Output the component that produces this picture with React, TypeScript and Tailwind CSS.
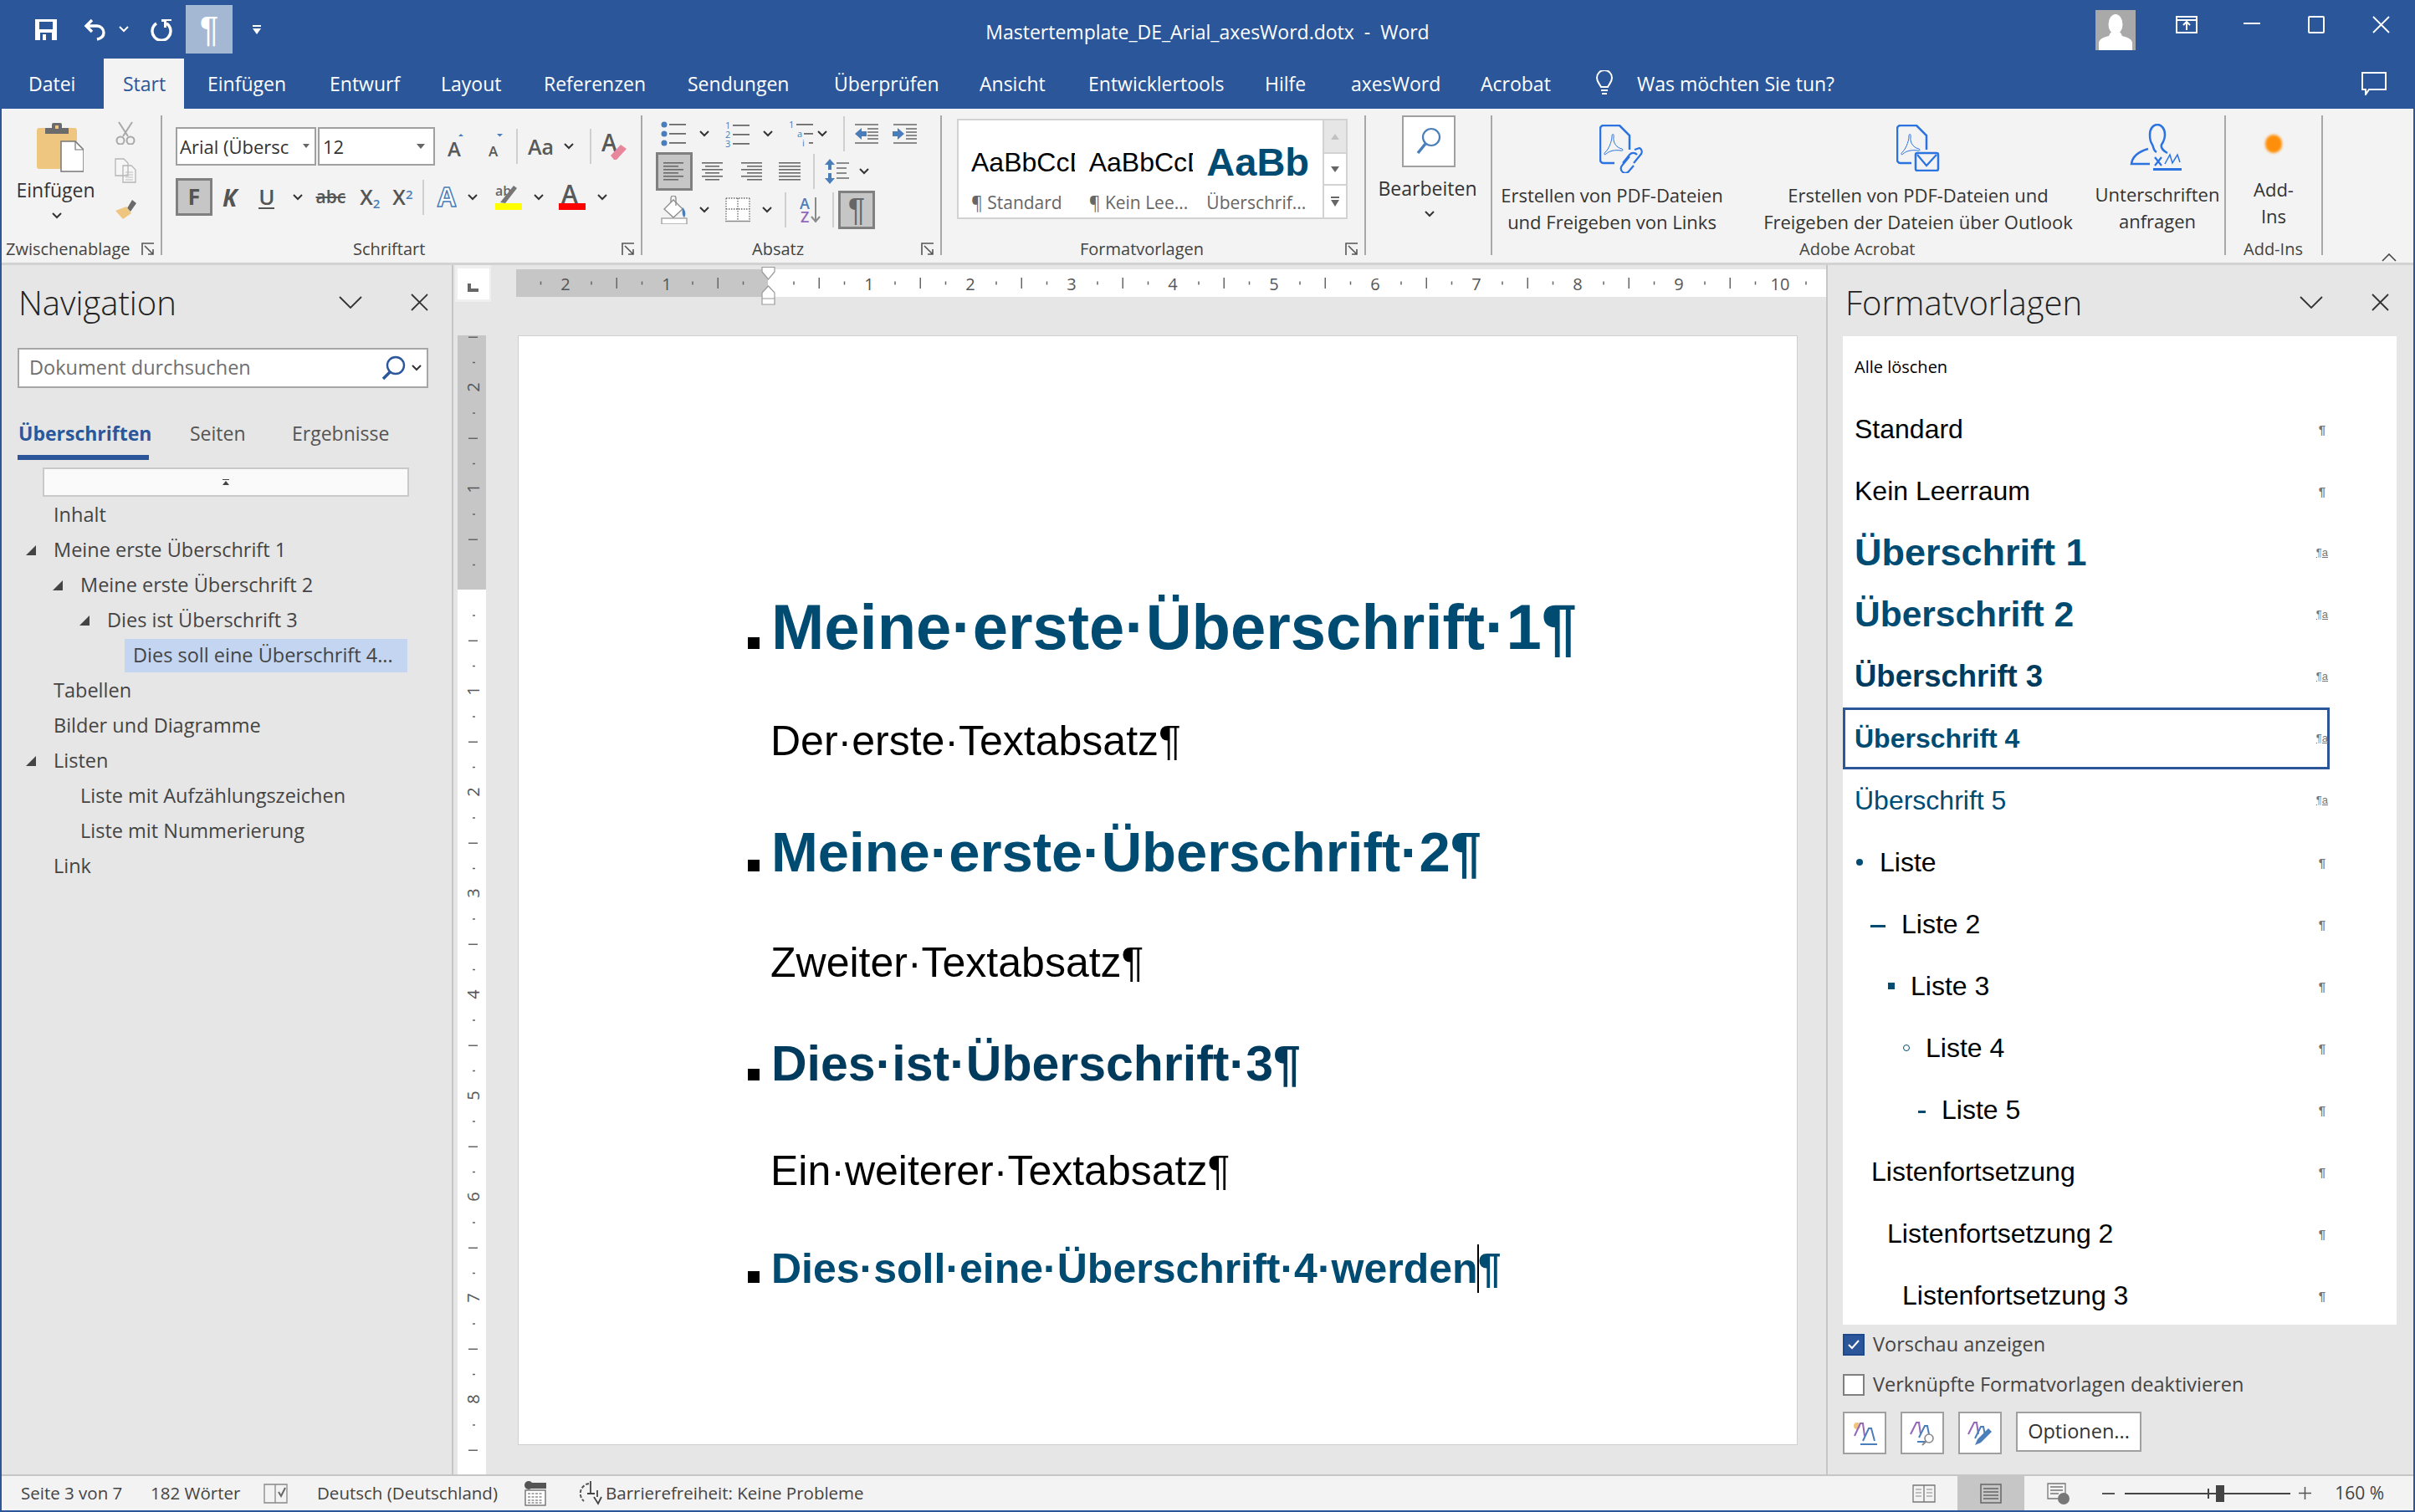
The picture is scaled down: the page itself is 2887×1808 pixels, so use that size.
import type { ReactNode } from 'react'

const Chev = ({ className = '' }: { className?: string }) => (
  <svg width="12" height="8" viewBox="0 0 12 8" className={`shrink-0 ${className}`}>
    <path d="M1 1l5 5 5-5" fill="none" stroke="#333" strokeWidth="2" />
  </svg>
)

const Sep = ({ className }: { className: string }) => <div className={`w-[2px] shrink-0 bg-[#cfcfcf] ${className}`} />

const Launcher = () => (
  <svg width="16" height="16" viewBox="0 0 16 16" className="ml-auto mr-[7px] shrink-0">
    <path d="M1 15V1H15M4 4L14 14M14 8V14H8" fill="none" stroke="#555" strokeWidth="1.6" />
  </svg>
)

function Group({ w, label, pl, launcher, children }: { w: string; label?: string; pl?: string; launcher?: boolean; children: ReactNode }) {
  return (
    <div className={`${w} h-[167px] mt-[8px] shrink-0 flex flex-col border-r-2 border-[#a8a8a8]`}>
      <div className="h-[153px] flex flex-col">{children}</div>
      <div className={`h-[14px] flex items-center text-[20px] text-[#444] whitespace-nowrap ${pl ?? ''}`}>
        {label}
        {launcher && <Launcher />}
      </div>
    </div>
  )
}

function LineIcon({ x, w = 28 }: { x: number[][]; w?: number }) {
  return (
    <svg width={w} height="22" viewBox={`0 0 ${w} 22`} className="shrink-0">
      {x.map(([a, b], i) => (
        <rect key={i} x={a} y={i * 4} width={b} height="1.6" fill="#6a6a6a" />
      ))}
    </svg>
  )
}

function SaveIcon() {
  return (
    <svg width="26" height="25" viewBox="0 0 26 25" className="shrink-0">
      <path fillRule="evenodd" fill="#fff" d="M0 0H26V25H0ZM5 3V12H21V3ZM6 16V25H20V16Z" />
      <rect x="9" y="18" width="4" height="7" fill="#fff" />
    </svg>
  )
}

function UndoIcon() {
  return (
    <svg width="27" height="27" viewBox="0 0 27 27" className="shrink-0">
      <path d="M10 2L3 9l7 7M3 9h13a8 8 0 0 1 8 8c0 4-3 7-8 8" fill="none" stroke="#fff" strokeWidth="3.4" />
    </svg>
  )
}

function RedoIcon() {
  return (
    <svg width="29" height="27" viewBox="0 0 29 27" className="shrink-0">
      <path d="M9 6a11 11 0 1 0 12 0" fill="none" stroke="#fff" strokeWidth="3.4" />
      <path d="M15 1h12v2h-6v8h-3V4h-3Z" fill="#fff" />
    </svg>
  )
}

function WindowButtons() {
  return (
    <div className="flex items-start pt-[12px] pr-[28px]">
      <div className="w-[48px] h-[48px] bg-[#a9a9a9] overflow-hidden">
        <svg width="48" height="48" viewBox="0 0 48 48">
          <ellipse cx="24" cy="17" rx="8.5" ry="12" fill="#fff" />
          <path d="M18 27h12l2 4c8 2 11 4 12 8v9H4v-9c1-4 4-6 12-8Z" fill="#fff" />
        </svg>
      </div>
      <svg width="26" height="21" viewBox="0 0 26 21" className="ml-[48px] mt-[7px]">
        <path d="M1 1H25V20H1ZM1 5H25M13 17V8M9 11l4-4 4 4" fill="none" stroke="#fff" strokeWidth="2" />
      </svg>
      <div className="ml-[55px] mt-[15px] w-[20px] h-[2px] bg-white" />
      <svg width="20" height="21" viewBox="0 0 20 21" className="ml-[57px] mt-[7px]">
        <rect x="1" y="1" width="18" height="19" rx="1" fill="none" stroke="#fff" strokeWidth="2" />
      </svg>
      <svg width="21" height="21" viewBox="0 0 21 21" className="ml-[57px] mt-[7px]">
        <path d="M1 1L20 20M20 1L1 20" stroke="#fff" strokeWidth="1.8" />
      </svg>
    </div>
  )
}

const tabs: [string, string][] = [
  ['Einfügen', 'w-[146px]'],
  ['Entwurf', 'w-[133px]'],
  ['Layout', 'w-[123px]'],
  ['Referenzen', 'w-[172px]'],
  ['Sendungen', 'w-[175px]'],
  ['Überprüfen', 'w-[174px]'],
  ['Ansicht', 'w-[130px]'],
  ['Entwicklertools', 'w-[211px]'],
  ['Hilfe', 'w-[103px]'],
  ['axesWord', 'w-[155px]'],
  ['Acrobat', 'w-[136px]'],
]

function TabBar() {
  return (
    <div className="h-[60px] flex items-stretch text-white text-[23px] whitespace-nowrap">
      <div className="w-[122px] pl-[32px] flex items-center">Datei</div>
      <div className="w-[96px] pl-[23px] flex items-center bg-[#f3f3f3] text-[#2b579a] mr-[28px]">Start</div>
      {tabs.map(([t, w]) => (
        <div key={t} className={`${w} flex items-center`}>{t}</div>
      ))}
      <svg width="24" height="32" viewBox="0 0 24 32" className="self-center">
        <path d="M8 20C6 16 3 14 3 9a9 9 0 0 1 18 0c0 5-3 7-5 11ZM8 24h8M9 28h6" fill="none" stroke="#fff" strokeWidth="2" />
      </svg>
      <div className="ml-[27px] flex items-center">Was möchten Sie tun?</div>
      <svg width="30" height="28" viewBox="0 0 30 28" className="self-center ml-auto mr-[32px]">
        <path d="M1 1H29V21H9L5 27V21H1Z" fill="none" stroke="#fff" strokeWidth="2" />
      </svg>
    </div>
  )
}

function PasteIcon() {
  return (
    <svg width="56" height="60" viewBox="0 0 56 60" className="shrink-0">
      <rect x="0" y="7" width="48" height="49" rx="3" fill="#eec67f" />
      <path d="M10 7h8V3a2 2 0 0 1 2-2h8a2 2 0 0 1 2 2v4h8v7H10Z" fill="#6b6b6b" />
      <rect x="22" y="4" width="4" height="4" fill="#eec67f" />
      <path d="M29 23H46L56 33V59H29Z" fill="#fff" stroke="#777" strokeWidth="1.5" />
      <path d="M46 23V33H56" fill="none" stroke="#777" strokeWidth="1.2" />
    </svg>
  )
}

function ClipboardGroup() {
  return (
    <div className="flex pt-[7px]">
      <div className="w-[118px] pl-[13px] flex flex-col items-center">
        <div className="ml-[8px] mt-[1px]"><PasteIcon /></div>
        <span className="mt-[6px] text-[23px] leading-[30px] text-[#333] ml-[-2px]">Einfügen</span>
        <Chev className="mt-[12px]" />
      </div>
      <div className="flex flex-col items-center ml-[17px] w-[26px]">
        <svg width="26" height="28" viewBox="0 0 26 28">
          <path d="M5 1l11 17M21 1L10 18" stroke="#a8a8a8" strokeWidth="2" fill="none" />
          <circle cx="7" cy="23" r="4.5" fill="none" stroke="#a8a8a8" strokeWidth="2" />
          <circle cx="19" cy="23" r="4.5" fill="none" stroke="#a8a8a8" strokeWidth="2" />
        </svg>
        <svg width="26" height="30" viewBox="0 0 26 30" className="mt-[16px]">
          <path d="M1 1H11L16 6V21H1ZM10 9H20L25 14V29H10Z" fill="#f6f6f6" stroke="#b5b5b5" strokeWidth="1.3" />
          <path d="M13 17h9M13 20h9M13 23h9M13 26h9" stroke="#bdbdbd" />
        </svg>
        <svg width="26" height="23" viewBox="0 0 26 23" className="mt-[20px]">
          <path d="M15 10L21 0l5 4-7 10Z" fill="#6a6a6a" />
          <path d="M1 13l13-5 6 8-10 7Z" fill="#eec67f" />
        </svg>
      </div>
    </div>
  )
}

function FontGroup() {
  const big = 'font-bold text-[#555] text-[26px] leading-none'
  return (
    <div className="pl-[16px] pt-[14px] flex flex-col text-[#333]">
      <div className="h-[46px] flex items-center">
        <div className="w-[168px] h-[46px] bg-white border-2 border-[#a0a0a0] flex items-center pl-[3px] text-[22px] whitespace-nowrap overflow-hidden">
          Arial (Übersc
          <svg width="8" height="6" viewBox="0 0 8 6" className="ml-auto mr-[6px] shrink-0"><path d="M0 0H8L4 5Z" fill="#666" /></svg>
        </div>
        <div className="w-[140px] h-[46px] ml-[2px] bg-white border-2 border-[#a0a0a0] flex items-center pl-[4px] text-[22px]">
          12
          <svg width="10" height="7" viewBox="0 0 10 7" className="ml-auto mr-[10px]"><path d="M0 0H10L5 6Z" fill="#666" /></svg>
        </div>
        <svg width="24" height="30" viewBox="0 0 24 30" className="ml-[15px] shrink-0">
          <path d="M13 3l3-3 3 3Z" fill="#4a7ebb" />
          <text x="0" y="27" fontFamily="Open Sans" fontSize="24" fontWeight="600" fill="#595959">A</text>
        </svg>
        <svg width="20" height="30" viewBox="0 0 20 30" className="ml-[24px] shrink-0">
          <path d="M11 0h7l-3.500 3.500Z" fill="#4a7ebb" />
          <text x="1" y="27" fontFamily="Open Sans" fontSize="17" fontWeight="600" fill="#595959">A</text>
        </svg>
        <Sep className="h-[42px] ml-[14px]" />
        <span className="ml-[12px] text-[#595959] text-[25px] font-semibold leading-none">Aa</span>
        <Chev className="ml-[12px]" />
        <Sep className="h-[42px] ml-[19px]" />
        <svg width="32" height="32" viewBox="0 0 32 32" className="ml-[12px] shrink-0">
          <text x="0" y="22" fontFamily="Open Sans" fontSize="28" fontWeight="600" fill="#595959">A</text>
          <path d="M11 27l12-13 7 5-12 13h-3Z" fill="#e8879c" />
        </svg>
      </div>
      <div className="h-[45px] mt-[15px] flex items-center">
        <div className="w-[44px] h-[45px] bg-[#c6c6c6] border-[3px] border-[#808080] flex items-center justify-center font-bold text-[27px] text-[#555]">F</div>
        <span className={`ml-[12px] italic ${big} text-[28px]`}>K</span>
        <span className="ml-[26px] text-[#555] font-semibold text-[26px] leading-[26px] border-b-2 border-[#555]">U</span>
        <Chev className="ml-[22px]" />
        <span className="ml-[15px] text-[#555] text-[21px] font-semibold line-through">abc</span>
        <span className="ml-[17px] text-[#555] text-[25px] font-semibold leading-none">X<sub className="text-[15px] text-[#4a7ebb]">2</sub></span>
        <span className="ml-[15px] text-[#555] text-[25px] font-semibold leading-none">X<sup className="text-[15px] text-[#4a7ebb]">2</sup></span>
        <Sep className="h-[42px] ml-[12px]" />
        <svg width="24" height="30" viewBox="0 0 24 30" className="ml-[15px] shrink-0">
          <text x="1" y="26" fontFamily="Open Sans" fontSize="32" fontWeight="700" fill="#fff" stroke="#4a7ebb" strokeWidth="1.5">A</text>
        </svg>
        <Chev className="ml-[13px]" />
        <svg width="32" height="30" viewBox="0 0 32 30" className="ml-[21px] shrink-0">
          <text x="0" y="13" fontFamily="Open Sans" fontSize="16" fill="#666" fontWeight="600">ab</text>
          <path d="M6 21L22 1l4 3L12 22Z" fill="#767676" />
          <rect x="0" y="22" width="32" height="8" fill="#ffff00" />
        </svg>
        <Chev className="ml-[14px]" />
        <svg width="32" height="30" viewBox="0 0 32 30" className="ml-[18px] shrink-0">
          <text x="3" y="22" fontFamily="Open Sans" fontSize="30" fontWeight="600" fill="#595959">A</text>
          <rect x="0" y="22" width="32" height="8" fill="#ff0000" />
        </svg>
        <Chev className="ml-[14px]" />
      </div>
    </div>
  )
}

function ParagraphGroup() {
  const digit = 'Open Sans'
  return (
    <div className="flex flex-col">
      <div className="h-[44px] flex items-center pl-[22px]">
        <svg width="32" height="30" viewBox="0 0 32 30" className="shrink-0">
          {[4, 15, 26].map(y => (
            <g key={y}><circle cx="4" cy={y} r="3.500" fill="#4a7ebb" /><rect x="10" y={y - 1} width="20" height="1.8" fill="#6a6a6a" /></g>
          ))}
        </svg>
        <Chev className="ml-[14px]" />
        <svg width="32" height="32" viewBox="0 0 32 32" className="ml-[19px] shrink-0">
          {['1', '2', '3'].map((d, i) => (
            <g key={d}><text x="0" y={10 + i * 11} fontFamily={digit} fontSize="11" fill="#4a7ebb">{d}</text><rect x="9" y={5 + i * 11} width="20" height="1.8" fill="#6a6a6a" /></g>
          ))}
        </svg>
        <Chev className="ml-[13px]" />
        <svg width="32" height="32" viewBox="0 0 32 32" className="ml-[19px] shrink-0">
          <text x="0" y="9" fontFamily={digit} fontSize="11" fill="#4a7ebb">1</text><rect x="9" y="4" width="20" height="1.8" fill="#6a6a6a" />
          <text x="10" y="20" fontFamily={digit} fontSize="11" fill="#4a7ebb">a</text><rect x="18" y="15" width="11" height="1.8" fill="#6a6a6a" />
          <text x="16" y="31" fontFamily={digit} fontSize="11" fill="#4a7ebb">i</text><rect x="24" y="26" width="5" height="1.8" fill="#6a6a6a" />
        </svg>
        <Chev className="ml-[2px]" />
        <Sep className="h-[42px] ml-[19px]" />
        <svg width="30" height="24" viewBox="0 0 30 24" className="ml-[11px] shrink-0">
          <path d="M1 1H29M1 23H29M16 6H29M16 10H29M16 14H29M16 18H29" stroke="#6a6a6a" strokeWidth="1.6" />
          <path d="M1 12l8-7v4h6v6H9v4Z" fill="#4a7ebb" />
        </svg>
        <svg width="30" height="24" viewBox="0 0 30 24" className="ml-[16px] shrink-0">
          <path d="M1 1H29M1 23H29M16 6H29M16 10H29M16 14H29M16 18H29" stroke="#6a6a6a" strokeWidth="1.6" />
          <path d="M14 12l-8-7v4H0v6h6v4Z" fill="#4a7ebb" />
        </svg>
      </div>
      <div className="h-[46px] flex items-center pl-[16px]">
        <div className="w-[44px] h-[46px] bg-[#c6c6c6] border-[3px] border-[#808080] flex items-center justify-center">
          <LineIcon w={26} x={[[0, 24], [0, 18], [0, 24], [0, 18], [0, 24], [0, 18]]} />
        </div>
        <div className="ml-[11px]"><LineIcon w={26} x={[[0, 25], [4, 17], [0, 25], [4, 17], [0, 25], [4, 17]]} /></div>
        <div className="ml-[21px]"><LineIcon w={26} x={[[0, 25], [7, 18], [0, 25], [7, 18], [0, 25], [7, 18]]} /></div>
        <div className="ml-[19px]"><LineIcon w={27} x={[[0, 26], [0, 26], [0, 26], [0, 26], [0, 26], [0, 26]]} /></div>
        <Sep className="h-[42px] ml-[14px]" />
        <svg width="30" height="30" viewBox="0 0 30 30" className="ml-[12px] shrink-0">
          <path d="M6 0l6 7H8v6H4V7H0ZM6 30l6-7H8v-6H4v6H0Z" fill="#4a7ebb" />
          <path d="M14 5H29M14 11H26M14 17H26M14 23H29" stroke="#6a6a6a" strokeWidth="1.6" />
        </svg>
        <Chev className="ml-[11px]" />
      </div>
      <div className="h-[46px] flex items-center pl-[22px]">
        <svg width="32" height="34" viewBox="0 0 32 34" className="shrink-0">
          <path d="M15 5L4 16l11 10 11-10Z" fill="#fff" stroke="#8a8a8a" strokeWidth="1.3" />
          <path d="M12 8V3a3 3 0 0 1 6 0v9" fill="none" stroke="#8a8a8a" strokeWidth="1.3" />
          <path d="M26 14c4 4 4 9 2 12-2-1-3-6-2-12Z" fill="#4a7ebb" />
          <rect x="1" y="27" width="30" height="7" fill="#fff" stroke="#9c9c9c" strokeWidth="1.3" />
        </svg>
        <Chev className="ml-[14px]" />
        <svg width="30" height="30" viewBox="0 0 30 30" className="ml-[19px] shrink-0">
          <rect x="1" y="1" width="28" height="27" fill="#fff" />
          <path d="M1 1H29M1 14H29M1 1V28M15 1V28M29 1V28" fill="none" stroke="#6a6a6a" strokeDasharray="1.500 1.500" strokeWidth="1.3" />
          <path d="M0 28.500H30" stroke="#8a8a8a" strokeWidth="1.500" />
        </svg>
        <Chev className="ml-[14px]" />
        <Sep className="h-[42px] ml-[15px]" />
        <svg width="26" height="32" viewBox="0 0 26 32" className="ml-[16px] shrink-0">
          <text x="0" y="15" fontFamily={digit} fontSize="18" fontWeight="600" fill="#4a7ebb">A</text>
          <text x="1" y="31" fontFamily={digit} fontSize="18" fontWeight="600" fill="#9567b8">Z</text>
          <path d="M19 1V29M14 24l5 6 5-6" fill="none" stroke="#8a8a8a" strokeWidth="2" />
        </svg>
        <Sep className="h-[42px] ml-[13px]" />
        <div className="w-[44px] h-[46px] ml-[5px] bg-[#c6c6c6] border-[3px] border-[#808080] flex items-center justify-center text-[38px] leading-none text-[#666] font-['Liberation_Sans',sans-serif]">¶</div>
      </div>
    </div>
  )
}

function StylesGallery() {
  return (
    <div className="ml-[18px] mt-[4px] w-[467px] h-[120px] flex">
      <div className="w-[439px] bg-white border-2 border-[#d2d2d2] flex pl-[13px]">
        {[
          ['AaBbCcDd', '¶ Standard', "font-['Liberation_Sans',sans-serif] text-[32px] text-black"],
          ['AaBbCcDd', '¶ Kein Lee...', "font-['Liberation_Sans',sans-serif] text-[32px] text-black"],
          ['AaBb', 'Überschrif...', "font-['Liberation_Sans',sans-serif] font-bold text-[47px] text-[#004b72]"],
        ].map(([s, l, c]) => (
          <div key={l} className="w-[143px] pl-[2px] flex flex-col">
            <div className={`w-[124px] h-[80px] overflow-hidden whitespace-nowrap flex items-center pt-[20px] ${c}`}>{s}</div>
            <div className="text-[21px] text-[#666] whitespace-nowrap mt-[3px]">{l}</div>
          </div>
        ))}
      </div>
      <div className="w-[28px] flex flex-col border-y-2 border-r-2 border-[#d2d2d2] bg-white">
        <div className="h-[40px] bg-[#e6e6e6] border-b-2 border-[#d2d2d2] flex items-center justify-center">
          <svg width="10" height="7" viewBox="0 0 10 7"><path d="M0 7L5 0l5 7Z" fill="#c2c2c2" /></svg>
        </div>
        <div className="h-[38px] border-b-2 border-[#d2d2d2] flex items-center justify-center">
          <svg width="10" height="7" viewBox="0 0 10 7"><path d="M0 0H10L5 7Z" fill="#666" /></svg>
        </div>
        <div className="flex-1 flex items-center justify-center">
          <svg width="10" height="12" viewBox="0 0 10 12"><path d="M0 0H10V2H0ZM0 4H10L5 12Z" fill="#666" /></svg>
        </div>
      </div>
    </div>
  )
}

function AdobeGroup() {
  const blue = '#2b73e0'
  return (
    <div className="flex h-full text-[22px] leading-[32px] text-[#333] whitespace-nowrap">
      <div className="w-[310px] shrink-0 flex flex-col items-center">
        <svg width="52" height="58" viewBox="0 0 52 58" className="mt-[11px] ml-[-2px] shrink-0">
          <path d="M5 1H24L36 13V30M18 46H5a4 4 0 0 1-4-4V5a4 4 0 0 1 4-4" fill="none" stroke={blue} strokeWidth="2.500" />
          <path d="M7 33c3-2 8-12 8-19 0-4 3-3 2 1-1 7 4 13 10 14 2 1 1 3-2 2-5-1-13 0-17 4-2 2-3 0-1-2Z" fill="none" stroke={blue} strokeWidth="1" />
          <path d="M28 46l8-10a6 6 0 0 1 9 0M42 30l6-2a5 5 0 0 1 2 7l-9 11M36 38l-9 11a5 5 0 0 0 8 7l6-7" fill="none" stroke={blue} strokeWidth="2.200" />
        </svg>
        <span className="mt-[10px] ml-[-24px]">Erstellen von PDF-Dateien</span>
        <span className="ml-[-24px]">und Freigeben von Links</span>
      </div>
      <div className="w-[430px] shrink-0 flex flex-col items-center ml-[-16px]">
        <svg width="52" height="56" viewBox="0 0 52 56" className="mt-[11px] shrink-0">
          <path d="M5 1H24L36 13V30M18 46H5a4 4 0 0 1-4-4V5a4 4 0 0 1 4-4" fill="none" stroke={blue} strokeWidth="2.500" />
          <path d="M7 33c3-2 8-12 8-19 0-4 3-3 2 1-1 7 4 13 10 14 2 1 1 3-2 2-5-1-13 0-17 4-2 2-3 0-1-2Z" fill="none" stroke={blue} strokeWidth="1" />
          <rect x="23" y="34" width="27" height="21" rx="2" fill="#f3f3f3" stroke={blue} strokeWidth="2.500" />
          <path d="M25 36l11 13 12-13" fill="none" stroke={blue} strokeWidth="2.200" />
        </svg>
        <span className="mt-[12px]">Erstellen von PDF-Dateien und</span>
        <span>Freigeben der Dateien über Outlook</span>
      </div>
      <div className="w-[150px] shrink-0 flex flex-col items-center ml-[-4px]">
        <svg width="64" height="58" viewBox="0 0 64 58" className="mt-[10px] ml-[-2px] shrink-0">
          <path d="M32 34c-4-2-3-5-5-9-3-4-3-9-3-12 0-7 4-12 9-12 0 0 0 0 0 0 5 0 9 5 9 12 0 5-2 9-4 12-1 3 0 6 7 10M22 30C8 34 3 40 2 48H24" fill="none" stroke={blue} strokeWidth="2.500" />
          <path d="M30 40l8 10M38 40l-8 10" stroke={blue} strokeWidth="2.200" />
          <path d="M42 48l6-11 3 10 6-10 3 9" fill="none" stroke={blue} strokeWidth="1.500" />
          <rect x="28" y="53" width="34" height="3" fill={blue} />
        </svg>
        <span className="mt-[10px]">Unterschriften</span>
        <span>anfragen</span>
      </div>
    </div>
  )
}

function Ribbon() {
  return (
    <div className="h-[187px] bg-[#f3f3f3] border-b-[3px] border-[#d2d2d2] flex">
      <Group w="w-[192px]" label="Zwischenablage" pl="pl-[5px]" launcher><ClipboardGroup /></Group>
      <Group w="w-[574px]" label="Schriftart" pl="pl-[228px]" launcher><FontGroup /></Group>
      <Group w="w-[358px]" label="Absatz" pl="pl-[131px]" launcher><ParagraphGroup /></Group>
      <Group w="w-[507px]" label="Formatvorlagen" pl="pl-[165px]" launcher><StylesGallery /></Group>
      <Group w="w-[151px]">
        <div className="ml-[43px] w-[64px] h-[62px] bg-white border-2 border-[#a0a0a0] flex items-center justify-center shrink-0">
          <svg width="30" height="34" viewBox="0 0 30 34">
            <circle cx="18" cy="12" r="10" fill="none" stroke="#4a7ebb" strokeWidth="2.200" />
            <path d="M11 20L2 31" stroke="#4a7ebb" strokeWidth="3.500" />
          </svg>
        </div>
        <span className="mt-[10px] text-center text-[23px] leading-[30px] text-[#333] pl-[-2px] ml-[-2px]">Bearbeiten</span>
        <Chev className="ml-[70px] mt-[12px]" />
      </Group>
      <Group w="w-[877px]" label="Adobe Acrobat" pl="pl-[367px]"><AdobeGroup /></Group>
      <Group w="w-[116px]" label="Add-Ins" pl="pl-[21px]">
        <div className="flex flex-col items-center h-full text-[22px] leading-[32px] text-[#333]">
          <div className="w-[20px] h-[22px] mt-[23px] rounded-full bg-[#ff8f0a] blur-[1.5px] shrink-0" />
          <span className="mt-[27px]">Add-</span>
          <span>Ins</span>
        </div>
      </Group>
      <div className="flex-1 flex items-end justify-end pr-[20px] pb-[1px]">
        <svg width="18" height="10" viewBox="0 0 18 10"><path d="M1 9l8-8 8 8" fill="none" stroke="#444" strokeWidth="1.6" /></svg>
      </div>
    </div>
  )
}

const Tri = () => (
  <svg width="12" height="12" viewBox="0 0 12 12" className="shrink-0"><path d="M12 0V12H0Z" fill="#444" /></svg>
)

const navItems: { t: string; tri?: string; cls: string }[] = [
  { t: 'Inhalt', cls: 'pl-[62px]' },
  { t: 'Meine erste Überschrift 1', tri: 'ml-[29px] mr-[21px]', cls: '' },
  { t: 'Meine erste Überschrift 2', tri: 'ml-[61px] mr-[21px]', cls: '' },
  { t: 'Dies ist Überschrift 3', tri: 'ml-[93px] mr-[21px]', cls: '' },
]
const navItems2 = [
  { t: 'Tabellen', cls: 'pl-[62px]' },
  { t: 'Bilder und Diagramme', cls: 'pl-[62px]' },
  { t: 'Listen', cls: 'pl-[29px]', tri: true },
  { t: 'Liste mit Aufzählungszeichen', cls: 'pl-[94px]' },
  { t: 'Liste mit Nummerierung', cls: 'pl-[94px]' },
  { t: 'Link', cls: 'pl-[62px]' },
]

function NavPane() {
  return (
    <div className="w-[540px] shrink-0 border-r-2 border-[#c6c6c6] flex flex-col">
      <div className="h-[85px] flex items-center pl-[20px] pr-[28px] pt-[4px]">
        <span className="text-[40px] font-light text-[#222] leading-none">Navigation</span>
        <svg width="28" height="15" viewBox="0 0 28 15" className="ml-auto"><path d="M1 1l13 13L27 1" fill="none" stroke="#333" strokeWidth="1.800" /></svg>
        <svg width="21" height="21" viewBox="0 0 21 21" className="ml-[58px]"><path d="M1 1L20 20M20 1L1 20" stroke="#333" strokeWidth="1.800" /></svg>
      </div>
      <div className="ml-[19px] mt-[14px] w-[491px] h-[48px] bg-white border-2 border-[#a6a6a6] flex items-center pl-[12px] pr-[6px]">
        <span className="text-[23.500px] text-[#6f6f6f]">Dokument durchsuchen</span>
        <svg width="30" height="30" viewBox="0 0 30 30" className="ml-auto">
          <circle cx="18" cy="12" r="10" fill="none" stroke="#2b579a" strokeWidth="2.400" />
          <path d="M11 20L3 28" stroke="#2b579a" strokeWidth="3.500" />
        </svg>
        <Chev className="ml-[7px]" />
      </div>
      <div className="ml-[19px] mt-[36px] flex items-end h-[50px] text-[23.500px] text-[#555] whitespace-nowrap">
        <div className="w-[157px] h-[50px] border-b-[6px] border-[#2b579a] font-bold text-[#2b579a] pl-[1px] pt-[1px] text-[23px]">Überschriften</div>
        <div className="w-[122px] h-[50px] pl-[49px] pt-[1px] text-[23px]">Seiten</div>
        <div className="h-[50px] pl-[49px] pt-[1px] text-[23px]">Ergebnisse</div>
      </div>
      <div className="ml-[49px] mt-[9px] w-[438px] h-[35px] bg-[#fafafa] border-2 border-[#c9c9c9] flex items-center justify-center shrink-0">
        <svg width="8" height="7" viewBox="0 0 8 7"><path d="M0 0H8V1H0ZM4 2l4 5H0Z" fill="#444" /></svg>
      </div>
      <div className="flex flex-col text-[23.500px] text-[#444] whitespace-nowrap mt-[1px]">
        {navItems.map(n => (
          <div key={n.t} className={`h-[42px] flex items-center ${n.cls}`}>
            {n.tri && <div className={n.tri}><Tri /></div>}
            {n.t}
          </div>
        ))}
        <div className="h-[42px] flex items-center">
          <div className="ml-[147px] w-[338px] h-[40px] pl-[10px] bg-[#c3d5f0] flex items-center">Dies soll eine Überschrift 4...</div>
        </div>
        {navItems2.map(n => (
          <div key={n.t} className={`h-[42px] flex items-center ${n.cls}`}>
            {n.tri && <div className="mr-[21px]"><Tri /></div>}
            {n.t}
          </div>
        ))}
      </div>
    </div>
  )
}

function HRuler() {
  const ticks = Array.from({ length: 53 }, (_, k) => k - 10)
  return (
    <svg width="1568" height="48" viewBox="0 0 1568 48" className="shrink-0">
      <rect x="0" y="5" width="1568" height="33" fill="#fff" />
      <rect x="0" y="5" width="301" height="33" fill="#c6c6c6" />
      {ticks.map(i => {
        const x = 301 + i * 30.25
        if (i === 0) return null
        if (i % 4 === 0)
          return <text key={i} x={x} y="22" textAnchor="middle" dominantBaseline="central" fontFamily="Open Sans" fontSize="20" fill="#555">{Math.abs(i / 4)}</text>
        return <rect key={i} x={x} y={i % 2 === 0 ? 15 : 19.5} width="1.5" height={i % 2 === 0 ? 13 : 4} fill="#666" />
      })}
      <path d="M294 2.500H309V8L301.500 17L294 8ZM294 40V33L301.500 25L309 33V40ZM294 40H309V47H294Z" fill="#fff" stroke="#9a9a9a" strokeWidth="1.200" />
    </svg>
  )
}

function VRuler() {
  const ticks = Array.from({ length: 46 }, (_, k) => k - 10)
  return (
    <svg width="34" height="1363" viewBox="0 0 34 1363" className="shrink-0">
      <rect x="0" y="0" width="34" height="1363" fill="#fff" />
      <rect x="0" y="0" width="34" height="304" fill="#c6c6c6" />
      {ticks.map(i => {
        const y = 304 + i * 30.25
        if (i === 0) return null
        if (i % 4 === 0)
          return <text key={i} x="18" y={y} textAnchor="middle" dominantBaseline="central" fontFamily="Open Sans" fontSize="20" fill="#555" transform={`rotate(-90 18 ${y})`}>{Math.abs(i / 4)}</text>
        return <rect key={i} x={i % 2 === 0 ? 13 : 18} y={y} width={i % 2 === 0 ? 11 : 3} height="1.500" fill="#666" />
      })}
    </svg>
  )
}

function Page() {
  const square = 'inline-block bg-black mr-[14px] shrink-0'
  return (
    <div className="flex-1 mb-[35px] bg-white border border-[#cfcfcf] pl-[274px] font-['Liberation_Sans',Arial,sans-serif] whitespace-nowrap">
      <div className="mt-[298px] h-[100px] flex items-baseline font-bold text-[76px] leading-[100px] text-[#004b72]">
        <span className={`${square} w-[14px] h-[14px]`} />Meine·erste·Überschrift·1¶
      </div>
      <div className="mt-[56px] h-[60px] pl-[27px] text-[50px] leading-[60px] text-black">Der·erste·Textabsatz¶</div>
      <div className="mt-[58px] h-[90px] flex items-baseline font-bold text-[67px] leading-[90px] text-[#004b72]">
        <span className={`${square} w-[14px] h-[14px]`} />Meine·erste·Überschrift·2¶
      </div>
      <div className="mt-[57px] h-[60px] pl-[27px] text-[50px] leading-[60px] text-black">Zweiter·Textabsatz¶</div>
      <div className="mt-[51px] h-[80px] flex items-baseline font-bold text-[59px] leading-[80px] text-[#003a5c]">
        <span className={`${square} w-[14px] h-[14px]`} />Dies·ist·Überschrift·3¶
      </div>
      <div className="mt-[58px] h-[60px] pl-[27px] text-[50px] leading-[60px] text-black">Ein·weiterer·Textabsatz¶</div>
      <div className="mt-[52px] h-[70px] flex items-baseline font-bold text-[50px] leading-[70px] text-[#004b72]">
        <span className={`${square} w-[14px] h-[14px]`} />Dies·soll·eine·Überschrift·4·werden<span className="inline-block w-[2px] h-[58px] bg-black self-center -ml-[1px] -mr-[1px]" />¶
      </div>
    </div>
  )
}

const rows: { t: string; cls: string; pad: string; bullet?: string; linked?: boolean; sel?: boolean }[] = [
  { t: 'Standard', cls: 'text-[32px] text-black', pad: 'pl-[11px]' },
  { t: 'Kein Leerraum', cls: 'text-[32px] text-black', pad: 'pl-[11px]' },
  { t: 'Überschrift 1', cls: 'text-[45px] font-bold text-[#004b72]', pad: 'pl-[11px]', linked: true },
  { t: 'Überschrift 2', cls: 'text-[42.500px] font-bold text-[#004b72]', pad: 'pl-[11px]', linked: true },
  { t: 'Überschrift 3', cls: 'text-[36.500px] font-bold text-[#003a5c]', pad: 'pl-[11px]', linked: true },
  { t: 'Überschrift 4', cls: 'text-[32px] font-bold text-[#004b72]', pad: 'pl-[11px]', linked: true, sel: true },
  { t: 'Überschrift 5', cls: 'text-[32px] text-[#004b72]', pad: 'pl-[11px]', linked: true },
  { t: 'Liste', cls: 'text-[32px] text-black', pad: 'pl-[13px]', bullet: 'w-[8px] h-[8px] rounded-full bg-[#004b72] mr-[20px]' },
  { t: 'Liste 2', cls: 'text-[32px] text-black', pad: 'pl-[30px]', bullet: 'w-[18px] h-[3px] bg-[#004b72] mr-[19px] mt-[5px]' },
  { t: 'Liste 3', cls: 'text-[32px] text-black', pad: 'pl-[51px]', bullet: 'w-[8px] h-[8px] bg-[#004b72] mr-[19px]' },
  { t: 'Liste 4', cls: 'text-[32px] text-black', pad: 'pl-[69px]', bullet: 'w-[8px] h-[8px] rounded-full border border-[#004b72] mr-[19px]' },
  { t: 'Liste 5', cls: 'text-[32px] text-black', pad: 'pl-[87px]', bullet: 'w-[9px] h-[3px] bg-[#004b72] mr-[19px] mt-[5px]' },
  { t: 'Listenfortsetzung', cls: 'text-[32px] text-black', pad: 'pl-[31px]' },
  { t: 'Listenfortsetzung 2', cls: 'text-[32px] text-black', pad: 'pl-[50px]' },
  { t: 'Listenfortsetzung 3', cls: 'text-[32px] text-black', pad: 'pl-[68px]' },
]

function StylesPane() {
  const iconBtn = 'w-[52px] h-[51px] bg-white border-2 border-[#a0a0a0] flex items-center justify-center shrink-0'
  return (
    <div className="flex-1 flex flex-col">
      <div className="h-[85px] flex items-center pl-[21px] pr-[29px] pt-[4px]">
        <span className="text-[40px] font-light text-[#222] leading-none">Formatvorlagen</span>
        <svg width="28" height="15" viewBox="0 0 28 15" className="ml-auto"><path d="M1 1l13 13L27 1" fill="none" stroke="#333" strokeWidth="1.800" /></svg>
        <svg width="21" height="21" viewBox="0 0 21 21" className="ml-[58px]"><path d="M1 1L20 20M20 1L1 20" stroke="#333" strokeWidth="1.800" /></svg>
      </div>
      <div className="ml-[18px] w-[662px] h-[1182px] bg-white overflow-hidden shrink-0 font-['Liberation_Sans',Arial,sans-serif]">
        <div className="h-[74px] pl-[14px] flex items-center text-[20px] text-black font-['Open_Sans',sans-serif]">Alle löschen</div>
        {rows.map(r => (
          <div key={r.t} className={`h-[74px] w-[582px] flex items-center border-[3px] whitespace-nowrap ${r.pad} ${r.sel ? 'border-[#2b579a]' : 'border-transparent'}`}>
            {r.bullet && <span className={`shrink-0 ${r.bullet}`} />}
            <span className={`${r.cls} leading-[60px]`}>{r.t}</span>
            {r.linked
              ? <span className="ml-auto -mr-[1px] text-[13px] leading-[14px] text-[#777] underline">¶a</span>
              : <span className="ml-auto mr-[2px] text-[15px] leading-none text-[#777] font-bold">¶</span>}
          </div>
        ))}
      </div>
      <div className="ml-[18px] mt-[11px] h-[26px] flex items-center text-[23.500px] text-[#444]">
        <div className="w-[26px] h-[26px] bg-[#2b579a] border-2 border-[#1e4a8d] flex items-center justify-center mr-[10px]">
          <svg width="16" height="14" viewBox="0 0 16 14"><path d="M2 7l4 4 8-9" fill="none" stroke="#fff" strokeWidth="2" /></svg>
        </div>
        Vorschau anzeigen
      </div>
      <div className="ml-[18px] mt-[22px] h-[26px] flex items-center text-[23.500px] text-[#444]">
        <div className="w-[26px] h-[26px] bg-white border-2 border-[#808080] mr-[10px]" />
        Verknüpfte Formatvorlagen deaktivieren
      </div>
      <div className="ml-[18px] mt-[19px] flex gap-[17px]">
        <div className={iconBtn}>
          <svg width="30" height="30" viewBox="0 0 30 30">
            <circle cx="6" cy="6" r="4" fill="#eec67f" />
            <path d="M3 18L10 3h3l2 15" fill="none" stroke="#9567b8" strokeWidth="2" />
            <path d="M13 24L20 9h3l4 15M10 28H30" fill="none" stroke="#4a7ebb" strokeWidth="2" />
          </svg>
        </div>
        <div className={iconBtn}>
          <svg width="30" height="30" viewBox="0 0 30 30">
            <path d="M1 16L8 2h3l2 14" fill="none" stroke="#9567b8" strokeWidth="2" />
            <path d="M11 20l7-14h3l2 10M9 25H20" fill="none" stroke="#4a7ebb" strokeWidth="2" />
            <circle cx="23" cy="21" r="5" fill="#fff" stroke="#8a8a8a" strokeWidth="1.600" />
            <path d="M19 25l-4 4" stroke="#8a8a8a" strokeWidth="2" />
          </svg>
        </div>
        <div className={iconBtn}>
          <svg width="30" height="30" viewBox="0 0 30 30">
            <path d="M1 16L8 2h3l2 14" fill="none" stroke="#9567b8" strokeWidth="2" />
            <path d="M9 21l7-14h3l2 10" fill="none" stroke="#4a7ebb" strokeWidth="2" />
            <path d="M9 29l3-7L25 9l4 4L16 26Z" fill="#4a7ebb" />
          </svg>
        </div>
        <div className="w-[150px] h-[48px] bg-white border-2 border-[#a0a0a0] flex items-center justify-center text-[23.500px] text-[#333]">Optionen...</div>
      </div>
    </div>
  )
}

function StatusBar() {
  return (
    <div className="h-[43px] bg-[#f3f3f3] border-t-2 border-[#c6c6c6] flex items-center text-[20.500px] text-[#444] whitespace-nowrap">
      <span className="ml-[23px] w-[155px]">Seite 3 von 7</span>
      <span className="w-[135px]">182 Wörter</span>
      <svg width="29" height="26" viewBox="0 0 29 26" className="shrink-0">
        <path d="M1 2H14V24H1ZM14 2H28V24H14Z" fill="none" stroke="#888" strokeWidth="1.300" />
        <path d="M18 11l3 5 5-10" fill="none" stroke="#666" strokeWidth="2" />
      </svg>
      <span className="ml-[35px] w-[248px]">Deutsch (Deutschland)</span>
      <svg width="26" height="30" viewBox="0 0 26 30" className="shrink-0">
        <circle cx="5" cy="5" r="5" fill="#555" />
        <rect x="8" y="2" width="18" height="7" fill="#555" />
        <rect x="1" y="11" width="24" height="18" fill="#fff" stroke="#666" strokeWidth="1.300" />
        <path d="M4 15h18M4 19h18M4 23h18M4 26h18" stroke="#555" strokeDasharray="3 1.500" />
      </svg>
      <svg width="30" height="32" viewBox="0 0 30 32" className="ml-[39px] shrink-0">
        <path d="M12 4a12 12 0 0 0-6 21" fill="none" stroke="#555" strokeWidth="2" strokeDasharray="4 2" />
        <path d="M14 1V16M10 16h9M22 12v8M18 20l5 8 4-8" fill="none" stroke="#444" strokeWidth="1.800" />
      </svg>
      <span className="ml-[2px]">Barrierefreiheit: Keine Probleme</span>
      <svg width="28" height="24" viewBox="0 0 28 24" className="ml-auto shrink-0">
        <path d="M1 2H14V22H1ZM14 2H27V22H14Z" fill="none" stroke="#777" strokeWidth="1.300" />
        <path d="M4 7h7M4 11h7M4 15h7M17 7h7M17 11h7M17 15h7" stroke="#888" />
      </svg>
      <div className="ml-[26px] w-[80px] h-[41px] bg-[#c6c6c6] flex items-center justify-center shrink-0">
        <svg width="26" height="24" viewBox="0 0 26 24">
          <rect x="1" y="1" width="24" height="22" fill="none" stroke="#666" strokeWidth="1.500" />
          <path d="M4 6h18M4 10h18M4 14h18M4 18h18" stroke="#666" strokeWidth="1.300" />
        </svg>
      </div>
      <svg width="28" height="26" viewBox="0 0 28 26" className="ml-[27px] shrink-0">
        <path d="M1 1H22V19H1ZM4 5H19M4 9H19M4 13H14" fill="none" stroke="#777" strokeWidth="1.300" />
        <circle cx="20" cy="19" r="7" fill="#777" />
      </svg>
      <div className="ml-[38px] w-[15px] h-[2px] bg-[#555] shrink-0" />
      <div className="ml-[12px] w-[198px] h-[2px] bg-[#444] flex items-center shrink-0">
        <div className="ml-[99px] w-[2px] h-[12px] bg-[#444]" />
        <div className="ml-[8px] w-[10px] h-[20px] bg-[#444]" />
      </div>
      <svg width="15" height="15" viewBox="0 0 15 15" className="ml-[10px] shrink-0"><path d="M7.500 0V15M0 7.500H15" stroke="#555" strokeWidth="1.500" /></svg>
      <span className="ml-[28px] mr-[35px] text-[21px] text-[#444]">160 %</span>
    </div>
  )
}

export default function App() {
  return (
    <div className="w-[2887px] h-[1808px] bg-[#2b579a] px-[2px] pb-[2px] flex flex-col overflow-hidden font-['Open_Sans',sans-serif]">
      <div className="h-[70px] grid grid-cols-[1fr_auto_1fr] text-white">
        <div className="flex items-center pl-[40px]">
          <div className="mb-[-1px]"><SaveIcon /></div>
          <div className="ml-[32px]"><UndoIcon /></div>
          <svg width="12" height="8" viewBox="0 0 12 8" className="ml-[15px]"><path d="M1 1l5 5 5-5" fill="none" stroke="#fff" strokeWidth="2" /></svg>
          <div className="ml-[24px]"><RedoIcon /></div>
          <div className="ml-[15px] w-[56px] h-[58px] bg-[#a5b8d3] flex items-center justify-center text-[42px] leading-none text-white font-['Liberation_Sans',sans-serif]">¶</div>
          <svg width="10" height="11" viewBox="0 0 10 11" className="ml-[24px]"><path d="M0 0H10V2H0ZM0 4H10L5 11Z" fill="#fff" /></svg>
        </div>
        <div className="flex items-center text-[23px] whitespace-nowrap pt-[6px]">Mastertemplate_DE_Arial_axesWord.dotx&nbsp; - &nbsp;Word</div>
        <div className="flex justify-end"><WindowButtons /></div>
      </div>
      <TabBar />
      <Ribbon />
      <div className="h-[1446px] flex bg-[#e6e6e6]">
        <NavPane />
        <div className="w-[1643px] shrink-0 flex flex-col border-r-2 border-[#c6c6c6]">
          <div className="h-[84px] flex items-start shrink-0 pl-[2px] overflow-hidden">
            <div className="w-[43px] h-[44px] bg-[#efefef] flex items-center justify-center shrink-0">
              <div className="w-[38px] h-[37px] bg-white flex items-end justify-center pb-[9px]">
                <svg width="13" height="10" viewBox="0 0 13 10"><path d="M0 0H4V6H13V10H0Z" fill="#666" /></svg>
              </div>
            </div>
            <div className="ml-[30px]"><HRuler /></div>
          </div>
          <div className="flex-1 flex pl-[5px] overflow-hidden">
            <div className="shrink-0"><VRuler /></div>
            <div className="flex-1 flex ml-[38px] mr-[34px]"><Page /></div>
          </div>
        </div>
        <StylesPane />
      </div>
      <StatusBar />
    </div>
  )
}
